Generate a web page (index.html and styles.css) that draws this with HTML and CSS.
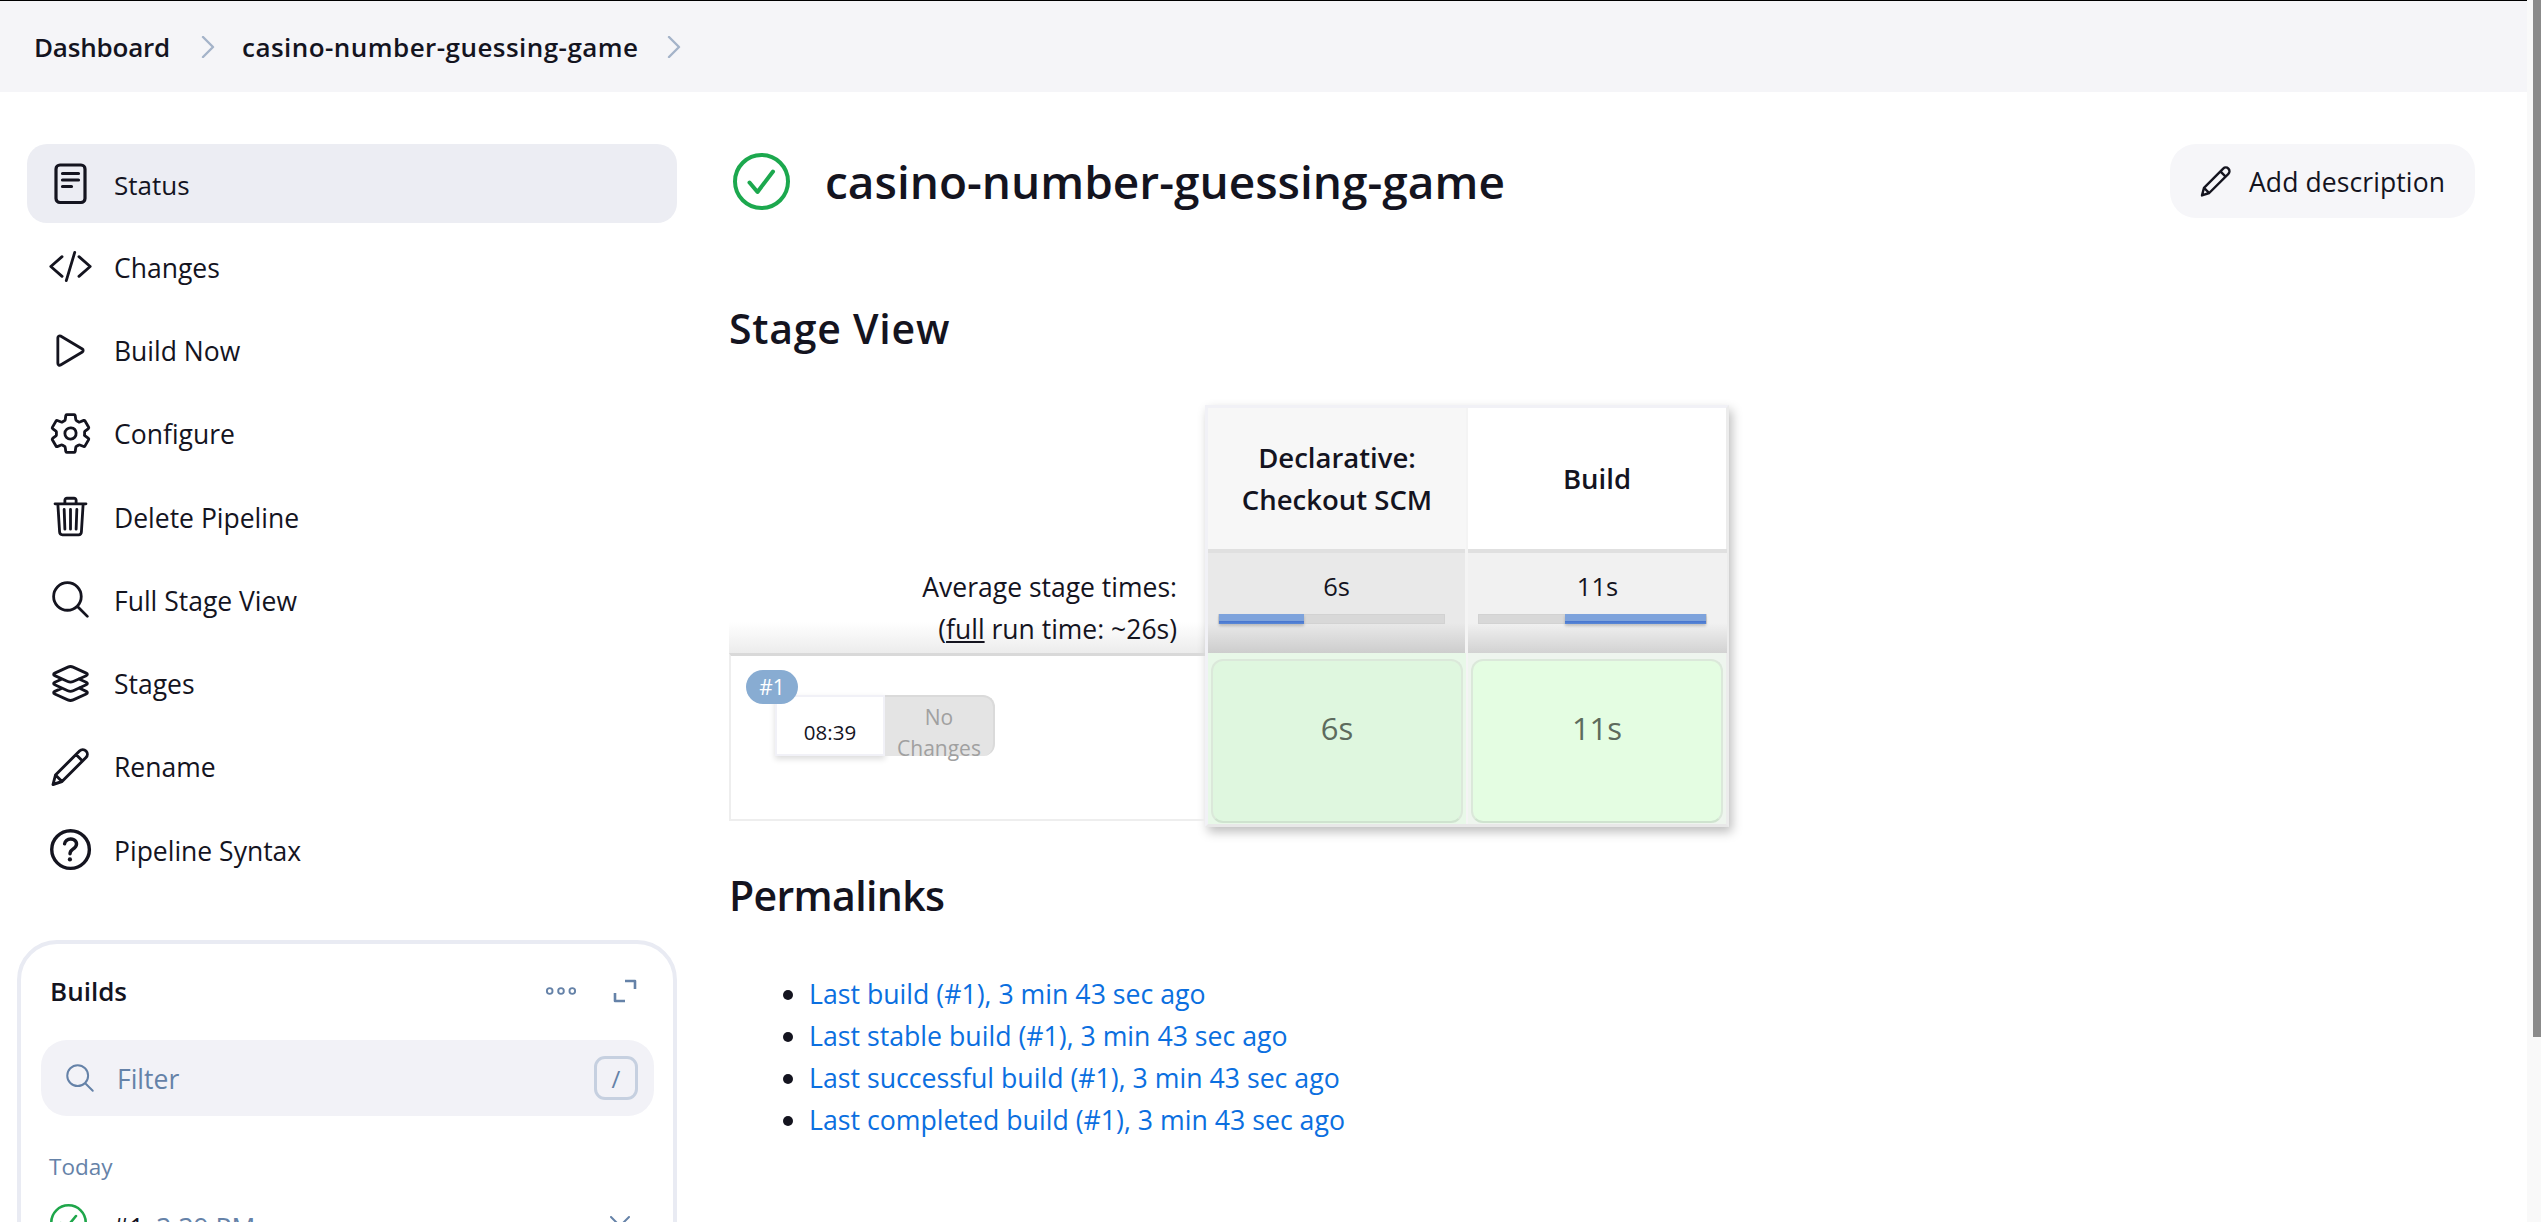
FILE: index.html
```html
<!DOCTYPE html>
<html lang="en">
<head>
<meta charset="utf-8">
<title>casino-number-guessing-game</title>
<link rel="stylesheet" href="styles.css">
</head>
<body>
<div class="page">
  <header class="crumbs">
    <span class="crumb">Dashboard</span>
    <svg class="chev" viewBox="0 0 14 22"><path d="M2 1l10 10L2 21"/></svg>
    <span class="crumb job">casino-number-guessing-game</span>
    <svg class="chev" viewBox="0 0 14 22"><path d="M2 1l10 10L2 21"/></svg>
  </header>
  <div class="layout">
    <aside class="sidebar">
      <nav class="nav">
        <a class="nav-item active"><svg class="ico" viewBox="0 0 45 45"><rect x="8" y="4" width="29" height="37.5" rx="4" stroke-width="3.2"/><path d="M14.5 12.5h16M14.5 19h16M14.5 25.5h9" stroke-width="3.2"/></svg><span class="nav-label">Status</span></a>
        <a class="nav-item"><svg class="ico" viewBox="0 0 512 512"><path d="M160 368L32 256l128-112M352 368l128-112-128-112M304 96l-96 320"/></svg><span class="nav-label">Changes</span></a>
        <a class="nav-item"><svg class="ico" viewBox="0 0 512 512"><path d="M112 111v290c0 17.44 17 28.52 31 20.16l247.9-148.37c12.12-7.25 12.12-26.33 0-33.58L143 91.84c-14-8.36-31 2.72-31 20.16z"/></svg><span class="nav-label">Build Now</span></a>
        <a class="nav-item"><svg class="ico" viewBox="0 0 512 512"><path d="M262.29 192.31a64 64 0 1057.4 57.4 64.13 64.13 0 00-57.4-57.4zM416.39 256a154.34 154.34 0 01-1.53 20.79l45.21 35.46a10.81 10.81 0 012.45 13.75l-42.77 74a10.81 10.81 0 01-13.14 4.59l-44.9-18.08a16.11 16.11 0 00-15.17 1.75A164.48 164.48 0 01325 400.8a15.94 15.94 0 00-8.82 12.14l-6.73 47.89a11.08 11.08 0 01-10.68 9.17h-85.54a11.11 11.11 0 01-10.69-8.87l-6.72-47.82a16.07 16.07 0 00-9-12.22 155.3 155.3 0 01-21.46-12.57 16 16 0 00-15.11-1.71l-44.89 18.07a10.81 10.81 0 01-13.14-4.58l-42.77-74a10.8 10.8 0 012.45-13.75l38.21-30a16.05 16.05 0 006-14.08c-.36-4.17-.58-8.33-.58-12.5s.21-8.27.58-12.35a16 16 0 00-6.07-13.94l-38.19-30A10.81 10.81 0 0149.48 186l42.77-74a10.81 10.81 0 0113.14-4.59l44.9 18.08a16.11 16.11 0 0015.17-1.75A164.48 164.48 0 01187 111.2a15.94 15.94 0 008.82-12.14l6.73-47.89A11.08 11.08 0 01213.23 42h85.54a11.11 11.11 0 0110.69 8.87l6.72 47.82a16.07 16.07 0 009 12.22 155.3 155.3 0 0121.46 12.57 16 16 0 0015.11 1.71l44.89-18.07a10.81 10.81 0 0113.14 4.58l42.77 74a10.8 10.8 0 01-2.45 13.75l-38.21 30a16.05 16.05 0 00-6.05 14.08c.33 4.14.55 8.3.55 12.47z"/></svg><span class="nav-label">Configure</span></a>
        <a class="nav-item"><svg class="ico" viewBox="0 0 512 512"><path d="M112 112l20 320c.95 18.49 14.4 32 32 32h184c17.67 0 30.87-13.51 32-32l20-320M80 112h352M192 112V72a23.93 23.93 0 0124-24h80a23.93 23.93 0 0124 24v40M256 176v224M184 176l8 224M328 176l-8 224"/></svg><span class="nav-label">Delete Pipeline</span></a>
        <a class="nav-item"><svg class="ico" viewBox="0 0 512 512"><path d="M221.09 64a157.09 157.09 0 10157.09 157.09A157.1 157.1 0 00221.09 64zM338.29 338.29L448 448"/></svg><span class="nav-label">Full Stage View</span></a>
        <a class="nav-item"><svg class="ico" viewBox="0 0 512 512"><path d="M434.8 137.65l-149.36-68.1c-16.19-7.4-42.69-7.4-58.88 0L77.3 137.65c-17.6 8-17.6 21.09 0 29.09l148 67.5c16.89 7.7 44.69 7.7 61.58 0l148-67.5c17.52-8 17.52-21.1-.08-29.09zM160 308.52l-82.7 37.11c-17.6 8-17.6 21.1 0 29.1l148 67.5c16.89 7.69 44.69 7.69 61.58 0l148-67.5c17.6-8 17.6-21.1 0-29.1l-79.94-38.47M160 204.48l-82.8 37.16c-17.6 8-17.6 21.1 0 29.1l148 67.49c16.89 7.7 44.69 7.7 61.58 0l148-67.49c17.7-8 17.7-21.1.1-29.1L352 204.48"/></svg><span class="nav-label">Stages</span></a>
        <a class="nav-item"><svg class="ico" viewBox="0 0 45 45"><path d="M5 40.5l2.5-9.5L31.5 7a4.6 4.6 0 016.5 0 4.6 4.6 0 010 6.5L14 37.5zM28 10.5l6.5 6.5M7.5 31l6.5 6.5" stroke-width="2.9"/></svg><span class="nav-label">Rename</span></a>
        <a class="nav-item"><svg class="ico" viewBox="45 45 421 421"><path d="M256 80a176 176 0 10176 176A176 176 0 00256 80zM200 202.29s.84-17.5 19.57-32.57C230.68 160.77 244 158.18 256 158c10.93-.14 20.69 1.67 26.53 4.45 10 4.76 29.47 16.38 29.47 41.09 0 26-17 37.81-36.37 50.8S251 281.43 251 296"/><circle class="dot" cx="250" cy="348" r="20"/></svg><span class="nav-label">Pipeline Syntax</span></a>
      </nav>
      <section class="builds">
        <div class="builds-head">
          <h2 class="builds-title">Builds</h2>
          <svg class="more" viewBox="0 0 34 10"><circle cx="5" cy="5" r="3"/><circle cx="17" cy="5" r="3"/><circle cx="29" cy="5" r="3"/></svg>
          <svg class="expand" viewBox="0 0 24 24"><path d="M12 2h10v8M2 14v8h10"/></svg>
        </div>
        <div class="filter">
          <svg class="filter-ico" viewBox="0 0 512 512"><path d="M221.09 64a157.09 157.09 0 10157.09 157.09A157.1 157.1 0 00221.09 64zM338.29 338.29L448 448"/></svg>
          <span class="filter-text">Filter</span>
          <kbd class="slash">/</kbd>
        </div>
        <div class="today">Today</div>
        <div class="build-row">
          <svg class="build-check" viewBox="0 0 57 57"><circle cx="28.5" cy="28.5" r="26.5"/><path d="M16.5 29.5l7 9L40 18.5"/></svg>
          <span class="build-num">#1</span>
          <span class="build-time">3:39 PM</span>
          <svg class="build-chev" viewBox="0 0 20 12"><path d="M1 1l9 9 9-9"/></svg>
        </div>
      </section>
    </aside>
    <main class="content">
      <div class="title-row">
        <svg class="status-ico" viewBox="0 0 57 57"><circle cx="28.5" cy="28.5" r="26.5"/><path d="M16.5 29.5l8 9.5L40 18.5"/></svg>
        <h1 class="title">casino-number-guessing-game</h1>
        <button class="add-desc"><svg class="pencil" viewBox="0 0 45 45"><path d="M5 40.5l2.5-9.5L31.5 7a4.6 4.6 0 016.5 0 4.6 4.6 0 010 6.5L14 37.5zM28 10.5l6.5 6.5M7.5 31l6.5 6.5"/></svg><span class="add-label">Add description</span></button>
      </div>
      <h2 class="section-title stage-title">Stage View</h2>
      <div class="stage">
        <div class="stage-left">
          <div class="stage-spacer"></div>
          <div class="avg-label">Average stage times:<br>(<u>full</u> run time: ~26s)</div>
          <div class="run">
            <span class="badge">#1</span>
            <div class="run-time">08:39</div>
            <div class="run-changes">No Changes</div>
          </div>
        </div>
        <div class="panel">
          <div class="head-cell shaded">Declarative:<br>Checkout SCM</div>
          <div class="head-cell">Build</div>
          <div class="avg-cell dark">
            <div class="avg-time">6s</div>
            <div class="bar"><div class="bar-fill" style="margin-left:0;width:37.7%"></div></div>
          </div>
          <div class="avg-cell">
            <div class="avg-time">11s</div>
            <div class="bar"><div class="bar-fill" style="margin-left:37.7%;width:62.3%"></div></div>
          </div>
          <div class="run-cell deep"><div class="run-box">6s</div></div>
          <div class="run-cell"><div class="run-box">11s</div></div>
        </div>
      </div>
      <h2 class="section-title perma-title">Permalinks</h2>
      <ul class="perma">
        <li><a>Last build (#1), 3 min 43 sec ago</a></li>
        <li><a>Last stable build (#1), 3 min 43 sec ago</a></li>
        <li><a>Last successful build (#1), 3 min 43 sec ago</a></li>
        <li><a>Last completed build (#1), 3 min 43 sec ago</a></li>
      </ul>
    </main>
  </div>
</div>
<div class="scroll"><div class="thumb"></div></div>
</body>
</html>
```
FILE: styles.css
```css
html, body { margin: 0; height: 1222px; overflow: hidden; background: #fff; }
body { display: flex; font-family: "Open Sans", "Noto Sans", sans-serif; font-size: 26.5px; color: #14141f; }
h1, h2 { margin: 0; }
svg { display: block; flex: none; fill: none; stroke: #14141f; stroke-linecap: round; stroke-linejoin: round; }

.page { width: 2527px; flex: none; }
.scroll { width: 14px; background: #f9f9f9; display: flex; justify-content: flex-end; }
.thumb { width: 8px; height: 1037px; background: #8b8b8b; }

.crumbs { height: 91px; border-top: 1px solid #000; background: #f5f5f8; display: flex; align-items: center; padding-left: 34px; font-size: 26px; font-weight: 600; }
.crumb { letter-spacing: -0.2px; }
.crumb.job { letter-spacing: 0.45px; margin-right: -3px; }
.chev { width: 14px; height: 22px; margin: 0 27px 0 31px; stroke: #a4b3c9; stroke-width: 2.4; }

.layout { display: flex; }
.sidebar { width: 660px; margin-left: 17px; flex: none; padding-top: 52px; }
.nav { margin-left: 10px; display: flex; flex-direction: column; gap: 4px; }
.nav-item { height: 79.25px; border-radius: 20px; display: flex; align-items: center; padding-left: 21px; gap: 21px; }
.nav-label { margin-top: 2px; }
.nav-item.active { background: #ecedf3; font-weight: 500; font-size: 26px; }
.ico { width: 45px; height: 45px; stroke-width: 32px; }
.dot { fill: #14141f; stroke: none; }

.builds { margin-top: 51px; border: 4px solid #e9ebf3; border-radius: 40px; height: 400px; box-sizing: border-box; }
.builds-head { display: flex; align-items: center; height: 44px; margin-top: 25px; padding-left: 29px; }
.builds-title { font-size: 26px; font-weight: 600; flex: 1; }
.more { width: 32px; height: 10px; stroke: #6582a8; stroke-width: 2; margin-right: 36px; }
.expand { width: 24px; height: 24px; stroke: #6582a8; stroke-width: 2.6; margin-right: 36px; stroke-linecap: butt; }

.filter { margin: 27px 19px 0 20px; height: 76px; background: #f2f2f7; border-radius: 26px; display: flex; align-items: center; padding: 0 16px 0 22px; color: #6582a8; }
.filter-ico { width: 34px; height: 34px; stroke: #6582a8; stroke-width: 30px; margin-right: 20px; }
.filter-text { flex: 1; margin-top: 2px; }
.slash { width: 44px; height: 44px; box-sizing: border-box; border: 3px solid #c6d0e0; border-radius: 11px; display: flex; align-items: center; justify-content: center; font: 24px "Open Sans", sans-serif; color: #6582a8; }

.today { margin: 35px 0 0 28px; line-height: 32px; font-size: 22.5px; color: #6582a8; }
.build-row { margin: 21px 0 0 29px; display: flex; align-items: flex-start; height: 44px; }
.build-check { width: 37px; height: 37px; stroke: #1ea64a; stroke-width: 4px; }
.build-num { margin: 7px 0 0 25px; font-weight: 500; line-height: 34px; }
.build-time { margin: 7px 0 0 12px; color: #6582a8; line-height: 34px; flex: 1; }
.build-chev { width: 20px; height: 12px; margin: 12px 43px 0 0; stroke: #6582a8; stroke-width: 2; }

.content { flex: 1; padding: 52px 52px 0 53px; }
.title-row { display: flex; align-items: center; height: 74px; }
.status-ico { width: 57px; height: 57px; margin: 0 35px 0 3px; stroke: #1ca84e; stroke-width: 4; }
.title { flex: 1; font-size: 46px; font-weight: 600; line-height: 74px; }
.add-desc { height: 74px; width: 305px; border: 0; border-radius: 26px; background: #f6f6f9; color: #14141f; font: 26.5px "Open Sans", sans-serif; display: flex; align-items: center; padding: 0 0 0 28px; gap: 15px; }
.add-label { margin-top: 2px; letter-spacing: 0.1px; }
.pencil { width: 36px; height: 36px; stroke-width: 3; }

.section-title { font-size: 41px; font-weight: 600; line-height: 48px; margin-left: -1px; }
.stage-title { margin-top: 86px; letter-spacing: 0.75px; }
.perma-title { margin-top: 44px; letter-spacing: -0.65px; padding-bottom: 2px; }

.stage { display: flex; margin: 53px 0 0 -1px; height: 422px; }
.stage-left { width: 476px; flex: none; }
.stage-spacer { height: 144px; }
.avg-label { height: 104px; box-sizing: border-box; padding: 17px 28px 0 0; text-align: right; line-height: 42px; background: linear-gradient(#fff 70%, #ececec); }
.run { position: relative; height: 168px; box-sizing: border-box; border-top: 3px solid #d9d9d9; border-left: 2px solid #eee; border-bottom: 2px solid #eee; display: flex; align-items: flex-start; padding: 39px 0 0 44px; }
.badge { position: absolute; left: 15px; top: 14px; width: 52px; height: 34px; border-radius: 17px; background: #88acd2; color: #fff; font-size: 21px; line-height: 34px; text-align: center; }
.run-time { width: 110px; height: 61px; box-sizing: border-box; background: #fff; border: 2px solid #f1f1f7; box-shadow: 0 3px 6px rgba(0,0,0,.14); text-align: center; font-size: 20.5px; padding-top: 21px; line-height: 28px; }
.run-changes { width: 110px; height: 61px; box-sizing: border-box; background: #e4e4e4; border-top: 2px solid #dadada; border-right: 2px solid #dadada; border-radius: 0 12px 12px 0; color: #a0a0a0; text-align: center; font-size: 21px; line-height: 31px; padding: 5px 2px 0; }

.panel { width: 524px; height: 422px; flex: none; box-sizing: border-box; border: solid #f1f1f6; border-width: 3px; border-bottom-color: #e8e8e8; border-right-color: #ececec; display: grid; grid-template-columns: 258px 258px; column-gap: 2px; grid-template-rows: 141px 104px 171px; box-shadow: 3px 5px 10px rgba(0,0,0,.26); background: #f4f4f4; }
.head-cell { display: flex; align-items: center; justify-content: center; text-align: center; font-size: 27.5px; font-weight: 600; line-height: 42px; background: #fff; }
.head-cell.shaded { background: #f7f7f7; }
.avg-cell { border-top: 4px solid #e0e0e0; background: linear-gradient(#f1f1f1 70%, #d2d2d2); text-align: center; box-sizing: border-box; padding-top: 12px; font-size: 25.5px; margin-right: -1px; }
.avg-cell.dark { background: linear-gradient(#e9e9e9 70%, #cdcdcd); margin: 0 1px 0 0; }
.avg-time { line-height: 42px; }
.bar { height: 10px; margin: 7px 20px 0 10px; background: #d8d8d8; border: 1px solid #d2d2d2; box-sizing: border-box; }
.bar-fill { height: 10px; margin-top: -1px; background: linear-gradient(#7ea3dc 70%, #4a78d0 75%, #5a88d6); box-shadow: 0 2px 3px rgba(0,0,0,.2); }
.run-cell { background: #eef5ee; padding: 6px 3px 1px; box-sizing: border-box; }
.run-cell.deep { background: #e8f8e8; }
.run-box { height: 100%; box-sizing: border-box; border: 2px solid #dbe8da; border-bottom-color: #cfe3cf; border-radius: 12px; background: #e4fde2; text-align: center; font-size: 31px; color: #5d6b5d; padding-top: 46px; line-height: 42px; }
.deep .run-box { background: #dff7df; }

.perma { margin: 52px 0 0; padding: 0 0 0 79px; line-height: 42px; }
.perma a { color: #0b6fe0; }
.perma li { font-size: 26.7px; }
```
